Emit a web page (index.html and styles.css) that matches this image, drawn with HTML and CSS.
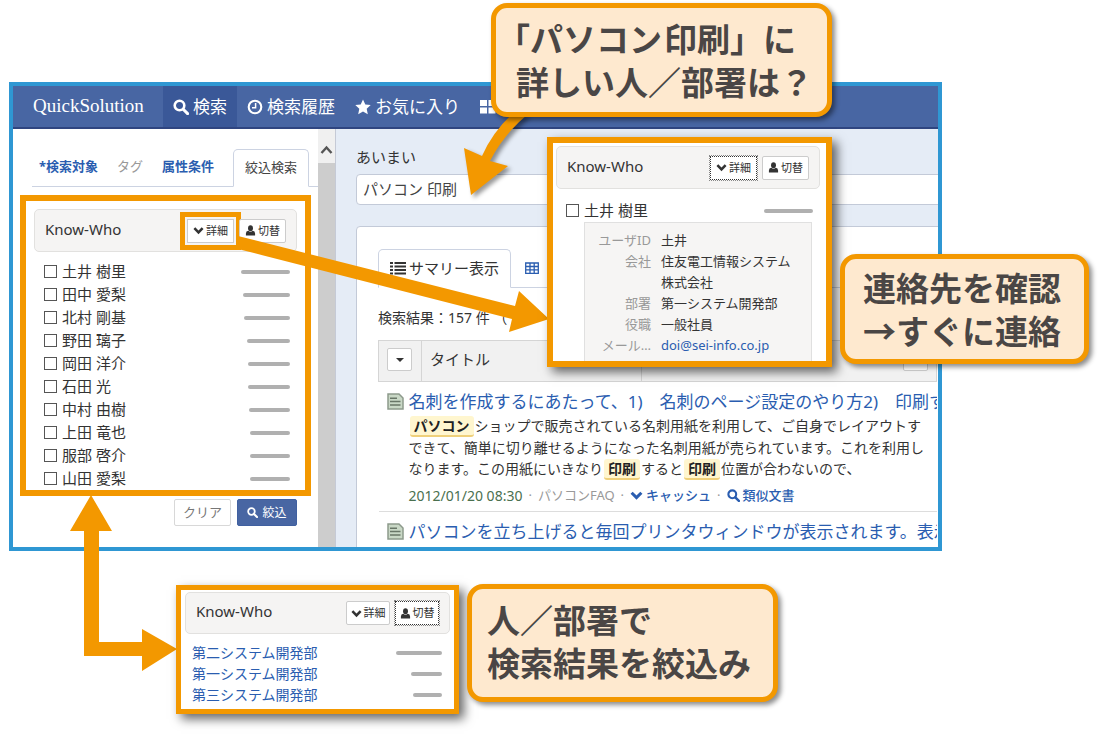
FILE: index.html
```html
<!DOCTYPE html>
<html lang="ja">
<head>
<meta charset="utf-8">
<title>QuickSolution Know-Who</title>
<link rel="stylesheet" href="styles.css">
</head>
<body>
<svg class="defs" aria-hidden="true">
  <symbol id="search" viewBox="0 0 16 16"><circle cx="6.5" cy="6.5" r="4.8" fill="none" stroke="currentColor" stroke-width="2.6"/><path d="M10.2 10.2l4.4 4.4" stroke="currentColor" stroke-width="3" stroke-linecap="round"/></symbol>
  <symbol id="clock" viewBox="0 0 16 16"><circle cx="8" cy="8" r="6.3" fill="none" stroke="currentColor" stroke-width="2.1"/><path d="M8.6 4v4.7H5" fill="none" stroke="currentColor" stroke-width="1.5"/></symbol>
  <symbol id="star" viewBox="0 0 16 16"><path d="M8 .5l2.3 5 5.4.6-4 3.7 1.1 5.5L8 12.6l-4.8 2.7 1.1-5.5-4-3.7 5.4-.6z" fill="currentColor"/></symbol>
  <symbol id="tiles" viewBox="0 0 16 16"><path d="M0 1h7v6H0zM8.500 1h7v6h-7zM0 8.500h7v6H0zM8.500 8.500h7v6h-7z" fill="currentColor"/></symbol>
  <symbol id="down" viewBox="0 0 12 12"><path d="M1.500 3.500L6 8l4.500-4.500" fill="none" stroke="currentColor" stroke-width="2.800"/></symbol>
  <symbol id="user" viewBox="0 0 12 12"><ellipse cx="6" cy="3.500" rx="2.700" ry="3.200" fill="currentColor"/><path d="M1 11.500V9.200Q1 6.900 3.600 6.400Q6 8.400 8.400 6.400Q11 6.900 11 9.200V11.500z" fill="currentColor"/></symbol>
  <symbol id="list" viewBox="0 0 16 14"><path d="M0 2h3M0 5.500h3M0 9h3M0 12.500h3M4.500 2H16M4.500 5.500H16M4.500 9H16M4.500 12.500H16" stroke="currentColor" stroke-width="2"/></symbol>
  <symbol id="grid" viewBox="0 0 14 12"><path d="M.7 1h12.600v10.300H.7zM.7 4.500h12.600M.7 7.900h12.600M5 1v10.300M9.200 1v10.300" fill="none" stroke="currentColor" stroke-width="1.300"/></symbol>
  <symbol id="doc" viewBox="0 0 17 17"><path d="M1 1h11l4 4v11H1z" fill="#c9d8c6" stroke="#8d9a8c" stroke-width="1.500"/><path d="M3 5.200h7M3 8.500h10.500M3 12h10.500" stroke="#687667" stroke-width="1.500"/></symbol>
</svg>

<div class="stage">
  <div class="window">
    <header class="bar">
      <span class="brand">QuickSolution</span>
      <nav class="nav">
        <a href="#" class="nav-item nav-active"><svg class="i16"><use href="#search"/></svg>検索</a>
        <a href="#" class="nav-item"><svg class="i16"><use href="#clock"/></svg>検索履歴</a>
        <a href="#" class="nav-item"><svg class="i16"><use href="#star"/></svg>お気に入り</a>
        <a href="#" class="nav-item" aria-label="メニュー"><svg class="i16"><use href="#tiles"/></svg></a>
      </nav>
    </header>

    <div class="body">
      <aside class="side">
        <div class="tabs">
          <a href="#" class="tab tab-target">*検索対象</a>
          <a href="#" class="tab tab-off">タグ</a>
          <a href="#" class="tab">属性条件</a>
          <a href="#" class="tab tab-active">絞込検索</a>
        </div>
        <section class="who who-main">
          <div class="who-head"><h2>Know-Who</h2>
            <button class="mini ringed"><svg class="i12"><use href="#down"/></svg>詳細</button>
            <button class="mini"><svg class="i12"><use href="#user"/></svg>切替</button>
          </div>
          <ul class="people">
            <li><label><input type="checkbox">土井 樹里</label><i class="meter" style="width:49px"></i></li>
            <li><label><input type="checkbox">田中 愛梨</label><i class="meter" style="width:47px"></i></li>
            <li><label><input type="checkbox">北村 剛基</label><i class="meter" style="width:46px"></i></li>
            <li><label><input type="checkbox">野田 璃子</label><i class="meter" style="width:43px"></i></li>
            <li><label><input type="checkbox">岡田 洋介</label><i class="meter" style="width:42px"></i></li>
            <li><label><input type="checkbox">石田 光</label><i class="meter" style="width:42px"></i></li>
            <li><label><input type="checkbox">中村 由樹</label><i class="meter" style="width:41px"></i></li>
            <li><label><input type="checkbox">上田 竜也</label><i class="meter" style="width:40px"></i></li>
            <li><label><input type="checkbox">服部 啓介</label><i class="meter" style="width:40px"></i></li>
            <li><label><input type="checkbox">山田 愛梨</label><i class="meter" style="width:40px"></i></li>
          </ul>
        </section>
        <div class="actions">
          <button class="btn">クリア</button>
          <button class="btn btn-primary"><svg class="i12"><use href="#search"/></svg>絞込</button>
        </div>
      </aside>

      <div class="scroll"><svg class="scroll-up" viewBox="0 0 17 34"><path d="M3.500 24L8.500 18.500l5 5.500" fill="none" stroke="#555" stroke-width="2.400"/></svg></div>

      <main class="main">
        <label class="query-label" for="q">あいまい</label>
        <input class="query" id="q" type="text" value="パソコン 印刷">
        <section class="panel">
          <div class="views">
            <a href="#" class="view view-active"><svg class="i-list"><use href="#list"/></svg>サマリー表示</a>
            <a href="#" class="view view-grid" aria-label="表形式"><svg class="i-grid"><use href="#grid"/></svg></a>
          </div>
          <p class="count">検索結果：157 件 （</p>
          <table class="results">
            <colgroup><col class="c-pick"><col class="c-title"><col></colgroup>
            <thead><tr>
              <th><button class="drop" aria-label="選択"><span class="caret"></span></button></th>
              <th>タイトル</th>
              <th class="th-end"><button class="drop" aria-label="列"></button></th>
            </tr></thead>
            <tbody>
              <tr><td colspan="3"><div class="hit">
                <svg class="i-doc"><use href="#doc"/></svg>
                <div>
                  <a href="#" class="title">名刺を作成するにあたって、1)　名刺のページ設定のやり方2)　印刷す</a>
                  <p class="snippet"><mark>パソコン</mark>ショップで販売されている名刺用紙を利用して、ご自身でレイアウトす<br>できて、簡単に切り離せるようになった名刺用紙が売られています。これを利用し<br>なります。この用紙にいきなり<mark>印刷</mark>すると<mark>印刷</mark>位置が合わないので、</p>
                  <p class="meta"><span class="date">2012/01/20 08:30</span><span>·</span><span>パソコンFAQ</span><span>·</span><a href="#"><svg class="i14"><use href="#down"/></svg>キャッシュ</a><span>·</span><a href="#"><svg class="i14"><use href="#search"/></svg>類似文書</a></p>
                </div>
              </div></td></tr>
              <tr><td colspan="3"><div class="hit">
                <svg class="i-doc"><use href="#doc"/></svg>
                <div><a href="#" class="title">パソコンを立ち上げると毎回プリンタウィンドウが表示されます。表示</a></div>
              </div></td></tr>
            </tbody>
          </table>
        </section>
      </main>
    </div>
  </div>

  <svg class="arrows" width="1100" height="736" viewBox="0 0 1100 736" aria-hidden="true">
    <g fill="#f39800">
      <path class="cast" d="M512 114H528Q503 135 490 161L508 166L471 195L464 148L482 156Q492 133 512 114z"/>
      <path d="M238 236L515 306L519 291L549 319L509 332L512 319L238 249z"/>
      <path d="M91 495L112 531H99V642H142V629L177 649L142 671V656H84V531H70z"/>
    </g>
  </svg>

  <section class="who pop pop-person">
    <div class="who-head"><h2>Know-Who</h2>
      <button class="mini focused"><svg class="i12"><use href="#down"/></svg>詳細</button>
      <button class="mini"><svg class="i12"><use href="#user"/></svg>切替</button>
    </div>
    <ul class="people"><li><label><input type="checkbox">土井 樹里</label><i class="meter" style="width:49px"></i></li></ul>
    <dl class="card">
      <dt>ユーザID</dt><dd>土井</dd>
      <dt>会社</dt><dd>住友電工情報システム株式会社</dd>
      <dt>部署</dt><dd>第一システム開発部</dd>
      <dt>役職</dt><dd>一般社員</dd>
      <dt>メール…</dt><dd><a href="#">doi@sei-info.co.jp</a></dd>
    </dl>
  </section>

  <section class="who pop pop-dept">
    <div class="who-head"><h2>Know-Who</h2>
      <button class="mini"><svg class="i12"><use href="#down"/></svg>詳細</button>
      <button class="mini focused"><svg class="i12"><use href="#user"/></svg>切替</button>
    </div>
    <ul class="depts">
      <li><a href="#">第二システム開発部</a><i class="meter" style="width:46px"></i></li>
      <li><a href="#">第一システム開発部</a><i class="meter" style="width:31px"></i></li>
      <li><a href="#">第三システム開発部</a><i class="meter" style="width:29px"></i></li>
    </ul>
  </section>

  <p class="callout callout-ask"><span class="hang">「パソコン&#8202;印刷」に</span><br>詳しい人／部署は？</p>
  <p class="callout callout-contact">連絡先を確認<br>→すぐに連絡</p>
  <p class="callout callout-narrow">人／部署で<br>検索結果を絞込み</p>
</div>
</body>
</html>
```
FILE: styles.css
```css
* { box-sizing: border-box; }
body {
  margin: 0;
  background: #fff;
  color: #333;
  font: 14px/21px "Noto Sans", "Noto Sans CJK JP", sans-serif;
}
h2, p, ul, dl, dd { margin: 0; padding: 0; }
ul { list-style: none; }
a { color: #2a5db0; text-decoration: none; }
button, input { font: inherit; color: inherit; margin: 0; }
svg { flex: none; }
.defs { display: none; }
.i16 { width: 16px; height: 16px; }
.i14 { width: 13px; height: 13px; }
.i12 { width: 11px; height: 11px; }

.stage { position: relative; min-height: 736px; padding: 82px 158px 0 9px; overflow: hidden; }
.window { border: 4px solid #2f97d3; overflow: hidden; }

/* top bar */
.bar { display: flex; height: 43px; background: #4866a3; border-bottom: 2px solid #2f4580; color: #fff; overflow: hidden; }
.brand { width: 150px; padding-left: 20px; font: 19px/40px "Liberation Serif", serif; }
.nav { display: flex; font-size: 17px; line-height: 38px; white-space: nowrap; }
.nav-item { display: flex; align-items: center; gap: 4px; padding: 0 10px; color: #fff; }
.nav-active { background: #3a5898; }

.body { display: grid; grid-template-columns: 305px 18px minmax(0, 1fr); height: 418px; }

/* sidebar */
.side { padding: 20px 0 0 7px; }
.tabs { display: flex; margin: 0 0 8px 12px; border-bottom: 1px solid #ccd3e2; font-size: 13px; line-height: 34px; padding-bottom: 2px; white-space: nowrap; }
.tab { padding: 0 0 0 19px; font-weight: 700; }
.tab-target { padding-left: 7px; }
.tab-off { color: #999; font-weight: 400; }
.tab-active { margin: 0 9px -3px auto; padding: 0 11px 2px; border: 1px solid #ccd3e2; border-bottom-color: #fff; border-radius: 5px 5px 0 0; color: #444; font-weight: 400; }
.who { border: 6px solid #f39800; background: #fff; padding: 8px; }
.who-main { width: 291px; padding-bottom: 0; }
.who-head { display: flex; align-items: center; gap: 5px; height: 43px; padding: 0 10px; border: 1px solid #e2e1df; border-radius: 5px; background: #f5f4f3; }
.who-head h2 { flex: 1; padding-bottom: 3px; font-size: 15px; font-weight: 400; }
.mini { display: flex; align-items: center; justify-content: center; gap: 2px; width: 47px; height: 24px; padding: 0; border: 1px solid #ccc; border-radius: 2px; background: #fff; font-size: 11px; line-height: 16px; white-space: nowrap; }
.ringed { border-radius: 0; outline: 5px solid #f39800; outline-offset: 2px; }
.focused { border: 1px dotted #333; border-radius: 0; outline: 1px dotted #888; }
.people { padding: 8px 7px 0 10px; font-size: 15px; line-height: 23px; }
.people li, .depts li { display: flex; align-items: center; justify-content: space-between; }
.people label { display: flex; align-items: center; gap: 5px; }
.people input { appearance: none; width: 13px; height: 13px; border: 1px solid #555; background: #fff; }
.meter { height: 4px; border-radius: 2px; background: #b0b0b0; }
.actions { display: flex; justify-content: flex-end; gap: 6px; padding: 3px 21px 0 0; }
.btn { display: flex; align-items: center; justify-content: center; gap: 4px; height: 27px; width: 57px; padding: 0; border: 1px solid #d8d8d8; border-radius: 2px; background: #fff; color: #777; font-size: 13px; }
.btn-primary { width: 60px; border-color: #4060a0; background: #4866a3; color: #fff; font-size: 12px; }
.scroll { background: #cdcdcd; border-right: 1px solid #c5cad6; }
.scroll-up { display: block; width: 17px; height: 34px; background: #f0f0f0; }

/* main column */
.main { padding: 18px 0 0 20px; background: #e5ecf6; overflow: hidden; }
.query-label { display: block; height: 27px; font-size: 15px; line-height: 21px; }
.query { display: block; width: calc(100% + 10px); height: 31px; padding: 0 6px 3px; border: 1px solid #c3cad8; border-radius: 4px; background: #fff; font-size: 15px; color: #444; }
.panel { width: calc(100% + 10px); min-height: 340px; margin-top: 21px; padding: 22px 10px 0 21px; border: 1px solid #c3cad8; border-radius: 4px; background: #fff; }
.views { display: flex; height: 39px; border-bottom: 1px solid #ccd3e2; line-height: 36px; }
.view { display: flex; align-items: center; padding: 0 14px; }
.view-active { gap: 3px; padding: 0 11px 2px; margin-bottom: -1px; border: 1px solid #ccd3e2; border-bottom-color: #fff; border-radius: 5px 5px 0 0; background: #fff; color: #333; font-size: 15px; }
.i-list { width: 16px; height: 14px; }
.i-grid { width: 14px; height: 12px; }
.count { padding: 19px 0 12px; }
.results { width: 100%; table-layout: fixed; border-collapse: collapse; white-space: nowrap; }
.c-pick { width: 43px; }
.c-title { width: 220px; }
th { height: 41px; padding: 0 8px 3px; border: 1px solid #d5d5d5; background: #f1f1f1; font-size: 15px; font-weight: 400; text-align: left; }
.drop { display: flex; align-items: center; justify-content: center; width: 25px; height: 23px; padding: 0; border: 1px solid #ccc; border-radius: 2px; background: #fff; }
.th-end .drop { margin-left: auto; }
.caret { border: 4px solid transparent; border-top-color: #333; border-bottom: 0; }
td { padding: 7px 0 6px 8px; border-bottom: 1px solid #ddd; overflow: hidden; }
.hit { display: flex; gap: 5px; }
.i-doc { width: 17px; height: 17px; margin-top: 4px; }
.title { display: block; font-size: 17px; line-height: 26px; }
.snippet { line-height: 21px; }
mark { display: inline-block; margin: 0 1px; padding: 0 4px; border-bottom: 2px solid #efd07a; border-radius: 3px; background: #fff6cf; color: #222; font-weight: 700; line-height: 19px; }
.meta { display: flex; gap: 6px; padding-top: 6px; font-size: 13px; line-height: 19px; color: #999; }
.meta a { display: flex; align-items: center; gap: 3px; font-weight: 500; }
.date { color: #4a704f; font-size: 14px; }

/* annotations laid over the window */
.arrows { position: absolute; left: 0; top: 0; }
.cast { filter: drop-shadow(3px 3px 2px rgba(0, 0, 0, .4)); }
.pop { position: absolute; box-shadow: 5px 5px 10px rgba(0, 0, 0, .6); }
.pop-person { left: 547px; top: 137px; width: 285px; height: 230px; padding: 3px 6px 0 3px; overflow: hidden; }
.pop-person .people { padding-top: 10px; }
.card { display: grid; grid-template-columns: 66px 1fr; column-gap: 10px; margin: 0 8px 0 28px; padding: 7px 12px 12px 0; border: 1px solid #e0e0e0; background: #f6f5f4; font-size: 13px; line-height: 21px; white-space: nowrap; }
.card dt { color: #999; text-align: right; }
.card dd { white-space: normal; }
.pop-dept { left: 176px; top: 585px; width: 283px; border-width: 5px; padding: 2px 4px 4px; }
.pop-dept .who-head { height: 42px; }
.pop-dept .mini { width: 44px; }
.depts { padding: 8px 8px 0 7px; line-height: 21px; }
.callout { position: absolute; border: 5px solid #f39800; border-radius: 16px; background: #fee9cf; box-shadow: 3px 3px 5px rgba(0, 0, 0, .45); color: #4a4645; font: 700 33px/43px "Noto Sans CJK JP", sans-serif; white-space: nowrap; }
.callout-ask { left: 491px; top: 3px; padding: 9px 14px 9px 20px; }
.hang { margin-left: -19px; }
.callout-contact { left: 840px; top: 254px; padding: 7px 23px 7px 18px; }
.callout-narrow { left: 467px; top: 584px; padding: 9px 22px 13px 15px; }
```
